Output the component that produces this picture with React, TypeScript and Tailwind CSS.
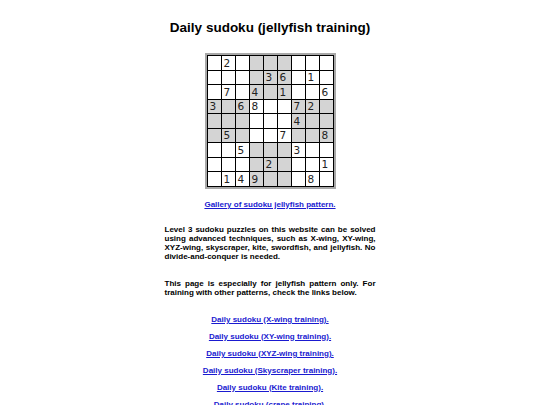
const puzzle = [
  "020000000",
  "000036010",
  "070401006",
  "306800720",
  "000000400",
  "050007008",
  "005000300",
  "000020001",
  "014900080",
]

const links = [
  "Daily sudoku (X-wing training).",
  "Daily sudoku (XY-wing training).",
  "Daily sudoku (XYZ-wing training).",
  "Daily sudoku (Skyscraper training).",
  "Daily sudoku (Kite training).",
  "Daily sudoku (crane training).",
]

function isShaded(r: number, c: number) {
  const br = Math.floor(r / 3)
  const bc = Math.floor(c / 3)
  return (br + bc) % 2 === 1
}

export default function App() {
  return (
    <div className="w-[540px] h-[405px] overflow-hidden bg-white font-['Liberation_Sans',Arial,sans-serif] text-black">
      <div className="flex flex-col items-center pt-[20px]">

        {/* Title */}
        <h1 className="text-[13.5px] leading-[16px] font-bold">
          Daily sudoku (jellyfish training)
        </h1>

        {/* Grid */}
        <div className="mt-[17px] border-2 border-[#a8a8a8]">
          <div className="grid grid-cols-[repeat(9,13px)] gap-px bg-black p-px">
            {puzzle.map((row, r) =>
              row.split("").map((d, c) => (
                <div
                  key={`${r}-${c}`}
                  className={`h-[13.5px] pl-[2px] flex items-center text-[10.5px] leading-none text-[#222] font-['DejaVu_Sans',sans-serif] ${
                    isShaded(r, c) ? "bg-[#d4d4d4]" : "bg-white"
                  }`}
                >
                  {d !== "0" ? d : ""}
                </div>
              ))
            )}
          </div>
        </div>

        {/* Gallery link */}
        <a href="#" className="mt-[11px] text-[8px] leading-[9px] font-bold text-[#1a1ad0] underline">
          Gallery of sudoku jellyfish pattern.
        </a>

        {/* Text */}
        <div className="w-[211px] mt-[16px] text-[8px] leading-[9px] font-bold text-justify">
          <p>
            Level 3 sudoku puzzles on this website can be solved using advanced techniques, such as
            X-wing, XY-wing, XYZ-wing, skyscraper, kite, swordfish, and jellyfish. No
            divide-and-conquer is needed.
          </p>
          <p className="mt-[18px]">
            This page is especially for jellyfish pattern only. For training with other patterns,
            check the links below.
          </p>
        </div>

        {/* Links */}
        <div className="mt-[18px] flex flex-col items-center gap-[8px]">
          {links.map((l) => (
            <a key={l} href="#" className="text-[8px] leading-[9px] font-bold text-[#1a1ad0] underline">
              {l}
            </a>
          ))}
        </div>
      </div>
    </div>
  )
}
